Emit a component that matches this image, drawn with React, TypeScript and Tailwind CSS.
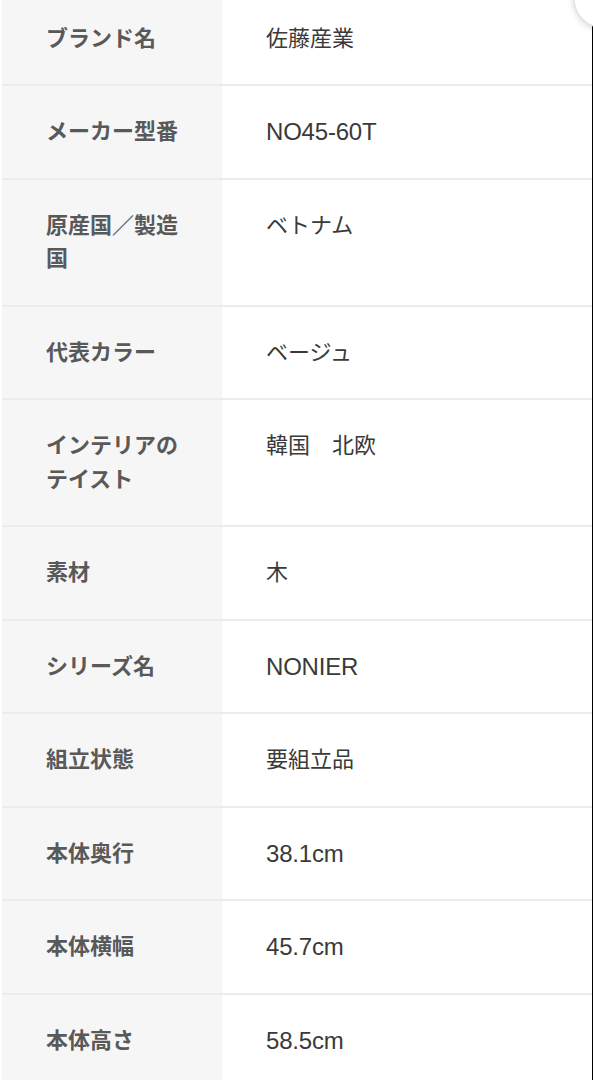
const rows: { label: string; value: string }[] = [
  { label: "ブランド名", value: "佐藤産業" },
  { label: "メーカー型番", value: "NO45-60T" },
  { label: "原産国／製造国", value: "ベトナム" },
  { label: "代表カラー", value: "ベージュ" },
  { label: "インテリアのテイスト", value: "韓国　北欧" },
  { label: "素材", value: "木" },
  { label: "シリーズ名", value: "NONIER" },
  { label: "組立状態", value: "要組立品" },
  { label: "本体奥行", value: "38.1cm" },
  { label: "本体横幅", value: "45.7cm" },
  { label: "本体高さ", value: "58.5cm" },
];

const isLatin = (s: string) => /^[\x20-\x7e]+$/.test(s);

export default function App() {
  return (
    <div className="relative flex h-[1080px] w-[593px] overflow-hidden bg-white font-['Liberation_Sans','Noto_Sans_CJK_JP',sans-serif]">
      <div className="ml-[2px] flex-1">
        <table className="-mt-[7.5px] w-full border-collapse text-[22px] leading-[33.5px]">
          <tbody>
            {rows.map((row) => (
              <tr key={row.label} className="border-b-2 border-[#ececec]">
                <th className="w-[220px] bg-[#f6f6f6] py-[29px] pl-[44px] pr-[30px] text-left align-top font-bold text-[#595959]">
                  {row.label}
                </th>
                <td
                  className={
                    isLatin(row.value)
                      ? "py-[29px] pl-[44px] pr-4 align-top text-[24px] font-normal tracking-[-0.2px] text-[#3a3a3a]"
                      : "py-[29px] pl-[44px] pr-4 align-top font-normal text-[#3a3a3a]"
                  }
                >
                  {row.value}
                </td>
              </tr>
            ))}
          </tbody>
        </table>
      </div>
      <div className="w-px bg-black" />
      <div className="absolute -right-[44px] -top-[35px] h-[64px] w-[64px] rounded-full border border-[#dcdcdc] bg-white shadow-[0_2px_6px_rgba(0,0,0,0.15)]" />
    </div>
  );
}
